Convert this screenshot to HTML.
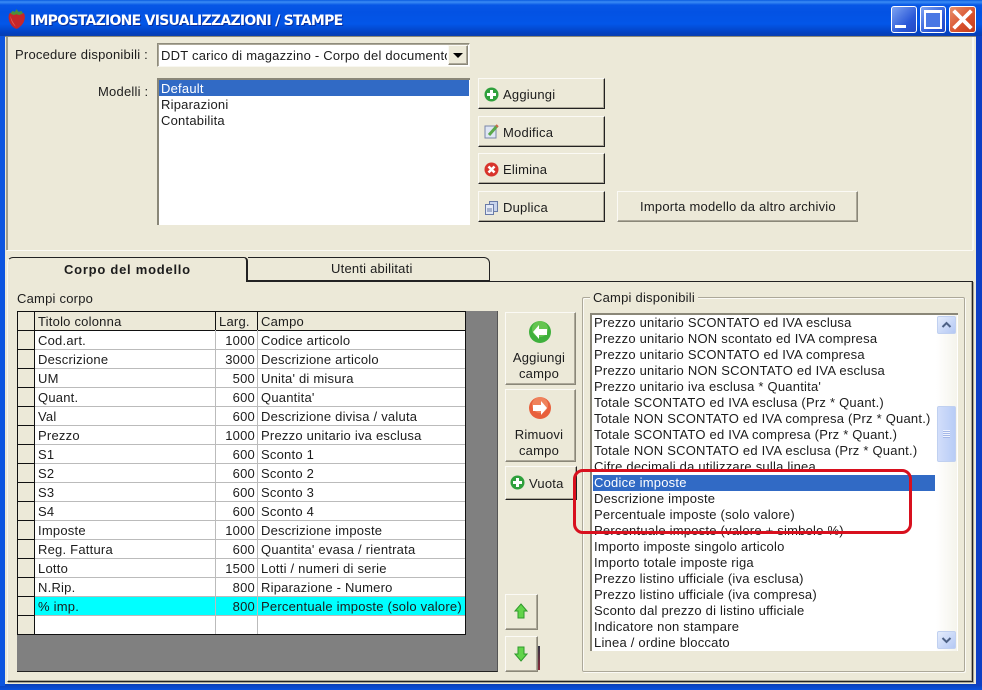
<!DOCTYPE html>
<html><head><meta charset="utf-8">
<style>
html,body{margin:0;padding:0}
body{width:982px;height:690px;overflow:hidden;position:relative;background:#ece9d8;font:13px/16px "Liberation Sans",Arial,sans-serif;color:#1c1c1c;letter-spacing:.22px}
div,svg{position:absolute;box-sizing:border-box}
.t{white-space:nowrap;position:absolute}
.btn{background:#ece9d8;border:1px solid;border-color:#fbfaf5 #222 #222 #fbfaf5;box-shadow:inset -1px -1px 0 #aca899}
.btn2{background:#ece9d8;border:1px solid;border-color:#fbfaf5 #8a8778 #8a8778 #fbfaf5;box-shadow:inset -1px -1px 0 #aca899}
</style></head><body>
<!-- window frame -->
<div style="left:0;top:0;width:982px;height:690px;background:#0a4fd8"></div>
<div style="left:0;top:0;width:982px;height:36px;background:linear-gradient(#0a5be0 0,#3b8cf5 2px,#0757e6 5px,#0352e3 12px,#0356e8 24px,#0340c0 33px,#0a3fb0 36px)"></div>
<div style="left:0;top:684px;width:982px;height:6px;background:linear-gradient(#0a3fb8,#0a50dc)"></div>
<div style="left:976px;top:36px;width:6px;height:650px;background:#0d3fc4"></div>
<div style="left:0;top:36px;width:5px;height:650px;background:#0d55e0"></div>
<div style="left:5px;top:36px;width:971px;height:648px;background:#ece9d8;border-top:1px solid #8d8a78"></div>
<div style="left:6px;top:37px;width:2px;height:213px;background:#a09d8c"></div>
<div style="left:972px;top:37px;width:2px;height:213px;background:#f8f7f0"></div>
<div style="left:7px;top:250px;width:966px;height:1px;background:#fbfaf5"></div>
<!-- strawberry -->
<svg style="left:5px;top:7px" width="24" height="24" viewBox="0 0 22 22"><path d="M4 6C7 4 14 4 17.500 6 19 9 18 14 15 17 13 19 11.500 20 10.500 20 8.500 19.500 6 17.500 4.500 14.500 3 11 3 8 4 6Z" fill="#c5262a"/><path d="M5 8C6 12 8 15 10 18 7 16 5 12 5 8Z" fill="#e85a50"/><path d="M5 6L7 3.500 9 4.500 10.500 2 12.500 4.500 15 3.500 16.500 6 13 7.500 10.500 6.500 8 7.500Z" fill="#4c8f3a"/></svg>
<span class="t" style="left:30px;top:12px;font:bold 14px/18px 'DejaVu Sans',sans-serif;color:#fff;letter-spacing:-.73px;text-shadow:1px 1px 0 #0a2f9c">IMPOSTAZIONE VISUALIZZAZIONI / STAMPE</span>
<!-- window buttons -->
<div style="left:891px;top:6px;width:26px;height:27px;border:1px solid #fff;border-radius:3px;background:linear-gradient(135deg,#7ea4f2,#2a58d8 65%,#2348c4)"></div>
<div style="left:895px;top:25px;width:11px;height:3px;background:#fff"></div>
<div style="left:920px;top:6px;width:26px;height:27px;border:1px solid #fff;border-radius:3px;background:linear-gradient(135deg,#7ea4f2,#2a58d8 65%,#2348c4)"></div>
<div style="left:924px;top:10px;width:18px;height:19px;border:2px solid #fff;border-top-width:3px;background:#4a78e4"></div>
<div style="left:949px;top:6px;width:27px;height:27px;border:1px solid #fff;border-radius:3px;background:linear-gradient(135deg,#e8906c,#d8502c 60%,#c03c1c)"></div>
<svg style="left:949px;top:6px" width="27" height="27"><path d="M6 6L21 21M21 6L6 21" stroke="#fff" stroke-width="3.800" stroke-linecap="square"/></svg>
<!-- top section -->
<span class="t" style="left:15px;top:47px">Procedure disponibili :</span>
<div style="left:157px;top:43px;width:313px;height:24px;background:#fff;border:1px solid;border-color:#8f8c7c #f8f7f0 #f8f7f0 #8f8c7c;box-shadow:inset 1px 1px 0 #aca899;overflow:hidden"><span class="t" style="left:3px;top:4px;width:286px;overflow:hidden">DDT carico di magazzino - Corpo del documento</span></div>
<div class="btn2" style="left:448px;top:45px;width:20px;height:20px"></div>
<svg style="left:452px;top:52px" width="12" height="7"><path d="M1 1H11L6 6Z" fill="#000"/></svg>
<span class="t" style="left:98px;top:84px">Modelli :</span>
<div style="left:157px;top:78px;width:313px;height:147px;background:#fff;border-top:2px solid #8a8778;border-left:2px solid #8a8778"></div>
<div style="left:159px;top:80px;width:310px;height:16px;background:#316ac5"></div>
<span class="t" style="left:161px;top:81px;color:#fff">Default</span>
<span class="t" style="left:161px;top:97px">Riparazioni</span>
<span class="t" style="left:161px;top:113px">Contabilita</span>
<!-- buttons -->
<div class="btn" style="left:478px;top:78px;width:127px;height:31px"></div>
<div class="btn" style="left:478px;top:116px;width:127px;height:31px"></div>
<div class="btn" style="left:478px;top:153px;width:127px;height:31px"></div>
<div class="btn" style="left:478px;top:191px;width:127px;height:31px"></div>
<div class="btn2" style="left:617px;top:191px;width:241px;height:31px"></div>
<svg style="left:484px;top:87px" width="15" height="15"><circle cx="7.500" cy="7.500" r="7" fill="#2fa03c"/><path d="M7.500 3V12M3 7.500H12" stroke="#fff" stroke-width="3"/></svg>
<span class="t" style="left:503px;top:87px">Aggiungi</span>
<svg style="left:484px;top:124px" width="15" height="15"><rect x="1" y="2" width="11" height="12" fill="#dfe6f4" stroke="#7a86a8"/><path d="M5 11L13 2" stroke="#5aa84a" stroke-width="3"/><path d="M12 1L14 3" stroke="#c86a4a" stroke-width="2"/></svg>
<span class="t" style="left:503px;top:125px">Modifica</span>
<svg style="left:484px;top:162px" width="15" height="15"><circle cx="7.500" cy="7.500" r="7" fill="#d8342c"/><path d="M4.500 4.500L10.500 10.500M10.500 4.500L4.500 10.500" stroke="#fff" stroke-width="2.600"/></svg>
<span class="t" style="left:503px;top:162px">Elimina</span>
<svg style="left:484px;top:200px" width="15" height="15"><rect x="5.500" y="1.500" width="8" height="10" fill="#c8d4ec" stroke="#6a7ca8"/><rect x="1.500" y="4.500" width="8" height="10" fill="#e4eaf6" stroke="#6a7ca8"/><path d="M3 9H8M3 11H8" stroke="#6a7ca8"/></svg>
<span class="t" style="left:503px;top:200px">Duplica</span>
<span class="t" style="left:640px;top:199px">Importa modello da altro archivio</span>
<!-- tabs -->
<div style="left:7px;top:281px;width:966px;height:401px;border:1px solid #222;border-left-color:#f8f7f0;border-top-color:#222;box-shadow:inset -1px -1px 0 #aca899,1px 1px 0 #aca899"></div>
<div style="left:7px;top:257px;width:241px;height:25px;background:#ece9d8;border:1px solid #222;border-width:1px 2px 0 1px;border-left-color:#f8f7f0;border-top-left-radius:6px;border-top-right-radius:4px"></div>
<div style="left:248px;top:257px;width:242px;height:24px;background:#ece9d8;border:1px solid #222;border-left:0;border-bottom:0;border-top-right-radius:6px"></div>
<div style="left:248px;top:280px;width:242px;height:1px;background:#222"></div>
<span class="t" style="left:64px;top:262px;font-weight:bold;letter-spacing:.75px">Corpo del modello</span>
<span class="t" style="left:331px;top:261px">Utenti abilitati</span>
<span class="t" style="left:17px;top:291px">Campi corpo</span>
<!-- grid -->
<div style="left:17px;top:311px;width:481px;height:361px;background:#808080;border-bottom:1px solid #222;border-right:1px solid #555"></div>
<div style="left:17px;top:311px;width:449px;height:324px;background:#fff;border:1px solid #111"></div>
<div style="left:18px;top:312px;width:447px;height:18px;background:#ece9d8"></div>
<div style="left:18px;top:330px;width:16px;height:304px;background:#ece9d8"></div>
<div style="left:18px;top:330px;width:447px;height:1px;background:#111"></div>
<div style="left:35px;top:597px;width:430px;height:19px;background:#00ffff"></div>
<div style="left:34px;top:312px;width:1px;height:322px;background:#111"></div>
<div style="left:215px;top:330px;width:1px;height:304px;background:#bbb"></div>
<div style="left:257px;top:330px;width:1px;height:304px;background:#bbb"></div>
<div style="left:215px;top:312px;width:1px;height:18px;background:#111"></div>
<div style="left:257px;top:312px;width:1px;height:18px;background:#111"></div>
<div style="left:35px;top:349px;width:430px;height:285px;background:repeating-linear-gradient(to bottom,#bbb 0,#bbb 1px,transparent 1px,transparent 19px)"></div>
<div style="left:18px;top:349px;width:16px;height:285px;background:repeating-linear-gradient(to bottom,#111 0,#111 1px,transparent 1px,transparent 19px)"></div>
<span class="t" style="left:38px;top:314px">Titolo colonna</span><span class="t" style="left:219px;top:314px">Larg.</span><span class="t" style="left:261px;top:314px">Campo</span>
<span class="t" style="left:38px;top:333px">Cod.art.</span><span class="t" style="right:727px;top:333px">1000</span><span class="t" style="left:261px;top:333px">Codice articolo</span>
<span class="t" style="left:38px;top:352px">Descrizione</span><span class="t" style="right:727px;top:352px">3000</span><span class="t" style="left:261px;top:352px">Descrizione articolo</span>
<span class="t" style="left:38px;top:371px">UM</span><span class="t" style="right:727px;top:371px">500</span><span class="t" style="left:261px;top:371px">Unita' di misura</span>
<span class="t" style="left:38px;top:390px">Quant.</span><span class="t" style="right:727px;top:390px">600</span><span class="t" style="left:261px;top:390px">Quantita'</span>
<span class="t" style="left:38px;top:409px">Val</span><span class="t" style="right:727px;top:409px">600</span><span class="t" style="left:261px;top:409px">Descrizione divisa / valuta</span>
<span class="t" style="left:38px;top:428px">Prezzo</span><span class="t" style="right:727px;top:428px">1000</span><span class="t" style="left:261px;top:428px">Prezzo unitario iva esclusa</span>
<span class="t" style="left:38px;top:447px">S1</span><span class="t" style="right:727px;top:447px">600</span><span class="t" style="left:261px;top:447px">Sconto 1</span>
<span class="t" style="left:38px;top:466px">S2</span><span class="t" style="right:727px;top:466px">600</span><span class="t" style="left:261px;top:466px">Sconto 2</span>
<span class="t" style="left:38px;top:485px">S3</span><span class="t" style="right:727px;top:485px">600</span><span class="t" style="left:261px;top:485px">Sconto 3</span>
<span class="t" style="left:38px;top:504px">S4</span><span class="t" style="right:727px;top:504px">600</span><span class="t" style="left:261px;top:504px">Sconto 4</span>
<span class="t" style="left:38px;top:523px">Imposte</span><span class="t" style="right:727px;top:523px">1000</span><span class="t" style="left:261px;top:523px">Descrizione imposte</span>
<span class="t" style="left:38px;top:542px">Reg. Fattura</span><span class="t" style="right:727px;top:542px">600</span><span class="t" style="left:261px;top:542px">Quantita' evasa / rientrata</span>
<span class="t" style="left:38px;top:561px">Lotto</span><span class="t" style="right:727px;top:561px">1500</span><span class="t" style="left:261px;top:561px">Lotti / numeri di serie</span>
<span class="t" style="left:38px;top:580px">N.Rip.</span><span class="t" style="right:727px;top:580px">800</span><span class="t" style="left:261px;top:580px">Riparazione - Numero</span>
<span class="t" style="left:38px;top:599px">% imp.</span><span class="t" style="right:727px;top:599px">800</span><span class="t" style="left:261px;top:599px">Percentuale imposte (solo valore)</span>
<!-- middle buttons -->
<div class="btn2" style="left:505px;top:312px;width:71px;height:73px"></div>
<svg style="left:528px;top:320px" width="24" height="24"><circle cx="12" cy="12" r="11" fill="#3fb03c"/><circle cx="12" cy="9" r="8" fill="#7ed45e" opacity=".6"/><path d="M11 5L5 12L11 19V15H19V9H11Z" fill="#fff"/></svg>
<span class="t" style="left:505px;top:350px;width:68px;text-align:center">Aggiungi</span>
<span class="t" style="left:505px;top:366px;width:68px;text-align:center">campo</span>
<div class="btn2" style="left:505px;top:389px;width:71px;height:73px"></div>
<svg style="left:528px;top:396px" width="24" height="24"><circle cx="12" cy="12" r="11" fill="#e8603c"/><circle cx="12" cy="9" r="8" fill="#f49a70" opacity=".6"/><path d="M13 5L19 12L13 19V15H5V9H13Z" fill="#fff"/></svg>
<span class="t" style="left:505px;top:427px;width:68px;text-align:center">Rimuovi</span>
<span class="t" style="left:505px;top:443px;width:68px;text-align:center">campo</span>
<div class="btn" style="left:505px;top:466px;width:72px;height:34px;border-bottom-color:#222;border-right-color:#222"></div>
<svg style="left:510px;top:475px" width="15" height="15"><circle cx="7.500" cy="7.500" r="7" fill="#2fa03c"/><path d="M7.500 3V12M3 7.500H12" stroke="#fff" stroke-width="3"/></svg>
<span class="t" style="left:529px;top:476px">Vuota</span>
<div class="btn2" style="left:505px;top:594px;width:33px;height:36px"></div>
<svg style="left:514px;top:603px" width="14" height="17"><path d="M7 1L13 8H10V15H4V8H1Z" fill="#62d44a" stroke="#2f9a2c"/></svg>
<div class="btn2" style="left:505px;top:636px;width:33px;height:36px"></div>
<svg style="left:514px;top:645px" width="14" height="17"><path d="M7 16L13 9H10V2H4V9H1Z" fill="#62d44a" stroke="#2f9a2c"/></svg>
<div style="left:538px;top:646px;width:2px;height:24px;background:linear-gradient(#334,#8a2a3a)"></div>
<!-- Campi disponibili -->
<div style="left:582px;top:297px;width:383px;height:375px;border:1px solid #aca899;border-radius:2px;box-shadow:inset 1px 1px 0 #fbfaf5,1px 1px 0 #fbfaf5"></div>
<div style="left:590px;top:290px;width:108px;height:16px;background:#ece9d8"></div>
<span class="t" style="left:593px;top:290px">Campi disponibili</span>
<div style="left:590px;top:313px;width:368px;height:338px;background:#fff;border-top:2px solid #8a8778;border-left:2px solid #8a8778;overflow:hidden">
<div style="left:0;top:0;width:344px;height:336px;overflow:hidden">
<span class="t" style="left:2px;top:0">Prezzo unitario SCONTATO ed IVA esclusa</span>
<span class="t" style="left:2px;top:16px">Prezzo unitario NON scontato ed IVA compresa</span>
<span class="t" style="left:2px;top:32px">Prezzo unitario SCONTATO ed IVA compresa</span>
<span class="t" style="left:2px;top:48px">Prezzo unitario NON SCONTATO ed IVA esclusa</span>
<span class="t" style="left:2px;top:64px">Prezzo unitario iva esclusa * Quantita'</span>
<span class="t" style="left:2px;top:80px">Totale SCONTATO ed IVA esclusa (Prz * Quant.)</span>
<span class="t" style="left:2px;top:96px">Totale NON SCONTATO ed IVA compresa (Prz * Quant.)</span>
<span class="t" style="left:2px;top:112px">Totale SCONTATO ed IVA compresa (Prz * Quant.)</span>
<span class="t" style="left:2px;top:128px">Totale NON SCONTATO ed IVA esclusa (Prz * Quant.)</span>
<span class="t" style="left:2px;top:144px">Cifre decimali da utilizzare sulla linea</span>
<div style="left:1px;top:160px;width:342px;height:16px;background:#316ac5"></div>
<span class="t" style="left:2px;top:160px;color:#fff">Codice imposte</span>
<span class="t" style="left:2px;top:176px">Descrizione imposte</span>
<span class="t" style="left:2px;top:192px">Percentuale imposte (solo valore)</span>
<span class="t" style="left:2px;top:208px">Percentuale imposte (valore + simbolo %)</span>
<span class="t" style="left:2px;top:224px">Importo imposte singolo articolo</span>
<span class="t" style="left:2px;top:240px">Importo totale imposte riga</span>
<span class="t" style="left:2px;top:256px">Prezzo listino ufficiale (iva esclusa)</span>
<span class="t" style="left:2px;top:272px">Prezzo listino ufficiale (iva compresa)</span>
<span class="t" style="left:2px;top:288px">Sconto dal prezzo di listino ufficiale</span>
<span class="t" style="left:2px;top:304px">Indicatore non stampare</span>
<span class="t" style="left:2px;top:320px">Linea / ordine bloccato</span>
</div></div>
<!-- scrollbar -->
<div style="left:936px;top:315px;width:21px;height:336px;background:linear-gradient(90deg,#fff,#f5f4ec)"></div>
<div style="left:937px;top:316px;width:19px;height:18px;background:linear-gradient(135deg,#e4ecfc,#b4c8f4);border:1px solid #c0d0f0;border-radius:2px"></div>
<svg style="left:941px;top:321px" width="11" height="8"><path d="M1.500 6L5.500 2L9.500 6" fill="none" stroke="#4d6185" stroke-width="2"/></svg>
<div style="left:937px;top:406px;width:19px;height:56px;background:linear-gradient(90deg,#d2defa,#b8ccf6);border:1px solid #c0d0f0;border-radius:2px"></div>
<div style="left:943px;top:430px;width:7px;height:8px;background:repeating-linear-gradient(to bottom,#eef3fe 0,#eef3fe 1px,#a4b8e8 1px,#a4b8e8 2px)"></div>
<div style="left:937px;top:631px;width:19px;height:18px;background:linear-gradient(135deg,#e4ecfc,#b4c8f4);border:1px solid #c0d0f0;border-radius:2px"></div>
<svg style="left:941px;top:636px" width="11" height="8"><path d="M1.500 2L5.500 6L9.500 2" fill="none" stroke="#4d6185" stroke-width="2"/></svg>
<!-- red annotation -->
<div style="left:573px;top:469px;width:339px;height:65px;border:3px solid #d8101e;border-radius:10px"></div>
</body></html>
